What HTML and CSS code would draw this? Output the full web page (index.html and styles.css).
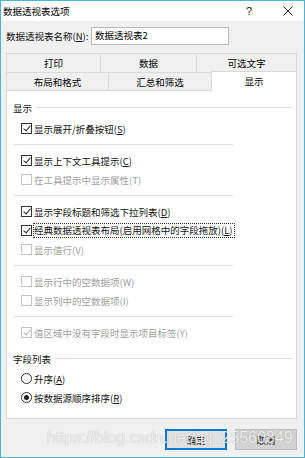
FILE: index.html
```html
<!DOCTYPE html>
<html lang="zh-CN">

<head>
    <meta charset="UTF-8">
    <meta name="viewport" content="width=device-width, initial-scale=1.0">
    <title>数据透视表选项</title>
    <link rel="stylesheet" href="styles.css">
</head>

<body>
    <div class="dialog">
        <div class="titlebar">
            <span class="title">数据透视表选项</span>
            <span class="help">?</span>
            <svg class="close" width="10" height="10" viewBox="0 0 10 10">
                <path d="M0.5 0.5 L9.5 9.5 M9.5 0.5 L0.5 9.5" stroke="#222" stroke-width="1" fill="none" />
            </svg>
        </div>

        <div class="body">
            <div class="name-row">
                <label class="name-label">数据透视表名称(<u>N</u>):</label>
                <div class="input">数据透视表2</div>
            </div>

            <!-- Onglets -->
            <div class="tabs">
                <div class="tab-row back">
                    <div class="tab">打印</div>
                    <div class="tab">数据</div>
                    <div class="tab">可选文字</div>
                </div>
                <div class="tab-row front">
                    <div class="tab">布局和格式</div>
                    <div class="tab">汇总和筛选</div>
                    <div class="tab active">显示</div>
                </div>
            </div>

            <div class="panel">
                <div class="group">
                    <span>显示</span>
                    <div class="group-line"></div>
                </div>

                <div class="opt"><span class="box checked"></span><span>显示展开/折叠按钮(<u>S</u>)</span></div>
                <div class="sep"></div>
                <div class="opt"><span class="box checked"></span><span>显示上下文工具提示(<u>C</u>)</span></div>
                <div class="opt disabled"><span class="box"></span><span>在工具提示中显示属性(T)</span></div>
                <div class="sep"></div>
                <div class="opt"><span class="box checked"></span><span>显示字段标题和筛选下拉列表(<u>D</u>)</span></div>
                <div class="opt"><span class="box checked"></span><span class="focus">经典数据透视表布局(启用网格中的字段拖放)(<u>L</u>)</span></div>
                <div class="opt disabled"><span class="box"></span><span>显示值行(V)</span></div>
                <div class="sep"></div>
                <div class="opt disabled"><span class="box"></span><span>显示行中的空数据项(W)</span></div>
                <div class="opt disabled"><span class="box"></span><span>显示列中的空数据项(I)</span></div>
                <div class="sep"></div>
                <div class="opt disabled"><span class="box checked"></span><span>值区域中没有字段时显示项目标签(Y)</span></div>

                <div class="group second">
                    <span>字段列表</span>
                    <div class="group-line"></div>
                </div>

                <div class="opt radio-row"><span class="radio"></span><span>升序(<u>A</u>)</span></div>
                <div class="opt"><span class="radio on"></span><span>按数据源顺序排序(<u>R</u>)</span></div>
            </div>

            <div class="buttons">
                <button class="btn btn-default">确定</button>
                <button class="btn btn-cancel">取消</button>
            </div>
        </div>

        <div class="watermark">https://blog.csdn.net/qq_25560849</div>
    </div>
</body>

</html>
```

FILE: styles.css
```css
* {
    margin: 0;
    padding: 0;
    box-sizing: border-box;
}

body {
    font-family: "Noto Sans CJK SC", "Noto Sans", sans-serif;
    font-size: 9.5px;
    color: #000;
    background: #fff;
}

u {
    text-decoration: underline;
    text-underline-offset: 1px;
}

.dialog {
    width: 305px;
    height: 458px;
    border: 1px solid #4cb2d6;
    background: #f0f0f0;
    position: relative;
    display: flex;
    flex-direction: column;
}

/* Barre de titre */
.titlebar {
    height: 20px;
    background: #fff;
    display: flex;
    align-items: center;
    padding-left: 2px;
}

.help {
    margin-left: auto;
    font-family: "Liberation Sans", sans-serif;
    font-size: 11px;
    color: #222;
}

.close {
    margin-left: 31px;
    margin-right: 11px;
}

.body {
    padding: 6px 7px 0 5px;
}

.name-row {
    display: flex;
    align-items: center;
    height: 18px;
}

.name-label {
    width: 85px;
    color: #111;
}

.input {
    width: 138px;
    height: 18px;
    background: #fff;
    border: 1px solid #b9b9b9;
    padding-left: 3px;
    line-height: 15px;
}

/* Onglets */
.tabs {
    margin-top: 8px;
}

.tab-row {
    display: flex;
    height: 19px;
}

.tab {
    height: 19px;
    border: 1px solid #d9d9d9;
    border-right: none;
    border-bottom: none;
    display: flex;
    align-items: center;
    justify-content: center;
    background: #f0f0f0;
}

.tab:last-child {
    border-right: 1px solid #d9d9d9;
}

.back .tab:nth-child(1) {
    width: 94px;
}

.back .tab:nth-child(2) {
    width: 96px;
}

.back .tab:nth-child(3) {
    width: 101px;
}

.front .tab {
    border-bottom: 1px solid #d9d9d9;
}

.front .tab:nth-child(1) {
    width: 102px;
}

.front .tab:nth-child(2) {
    width: 103px;
}

.front .tab.active {
    width: 86px;
    height: 20px;
    margin-top: -1px;
    background: #fff;
    border-bottom: none;
    padding-bottom: 1px;
    position: relative;
    z-index: 1;
}

/* Panneau */
.panel {
    height: 328px;
    background: #fff;
    border: 1px solid #d9d9d9;
    border-top: none;
    padding-top: 7px;
    display: flex;
    flex-direction: column;
}

.group {
    display: flex;
    align-items: center;
    height: 19px;
    padding-left: 6px;
    margin-bottom: 2px;
    color: #111;
}

.group-line {
    flex: 1;
    height: 1px;
    background: #dcdcdc;
    margin-left: 4px;
    margin-right: 4px;
}

.group.second {
    margin-top: 7px;
    margin-bottom: 1px;
}

.opt {
    display: flex;
    align-items: center;
    height: 19px;
    padding-left: 14px;
    color: #111;
}

.opt.disabled {
    color: #a0a0a0;
}

.box {
    width: 11px;
    height: 11px;
    border: 1px solid #333;
    background: #fff;
    margin-right: 2px;
    position: relative;
    flex-shrink: 0;
}

.box.checked::after {
    content: '';
    position: absolute;
    left: 3px;
    top: 0px;
    width: 3px;
    height: 6px;
    border-right: 1px solid #222;
    border-bottom: 1px solid #222;
    transform: rotate(40deg);
}

.disabled .box {
    border-color: #c4c4c4;
}

.disabled .box.checked::after {
    border-color: #b4b4b4;
}

.focus {
    border: 1px dotted #333;
    height: 15px;
    line-height: 13px;
    padding-right: 1px;
    margin-left: -1px;
}

.sep {
    width: 220px;
    height: 1px;
    background: #e0e0e0;
    margin: 6px 0 6px 6px;
}

.radio {
    width: 11px;
    height: 11px;
    border: 1px solid #333;
    border-radius: 50%;
    background: #fff;
    margin-right: 2px;
    position: relative;
    flex-shrink: 0;
}

.radio.on::after {
    content: '';
    position: absolute;
    left: 2px;
    top: 2px;
    width: 5px;
    height: 5px;
    border-radius: 50%;
    background: #222;
}

/* Boutons */
.buttons {
    display: flex;
    justify-content: flex-end;
    gap: 8px;
    margin-top: 10px;
}

.btn {
    width: 62px;
    height: 21px;
    font-family: inherit;
    font-size: 9.5px;
    color: #111;
    background: #e1e1e1;
    border: 1px solid #adadad;
}

.btn-default {
    border: 1px solid #0078d7;
    box-shadow: inset 0 0 0 1px #0078d7;
}

.btn-cancel {
    background: #d2d2d2;
    border-color: #bcbcbc;
}

/* Filigrane */
.watermark {
    position: absolute;
    left: 46px;
    top: 428px;
    font-family: "Liberation Sans", Arial, sans-serif;
    font-size: 16px;
    color: rgba(255, 255, 255, 0.85);
    text-shadow: 0 0 1px rgba(0, 0, 0, 0.35);
    pointer-events: none;
    white-space: nowrap;
}
```
